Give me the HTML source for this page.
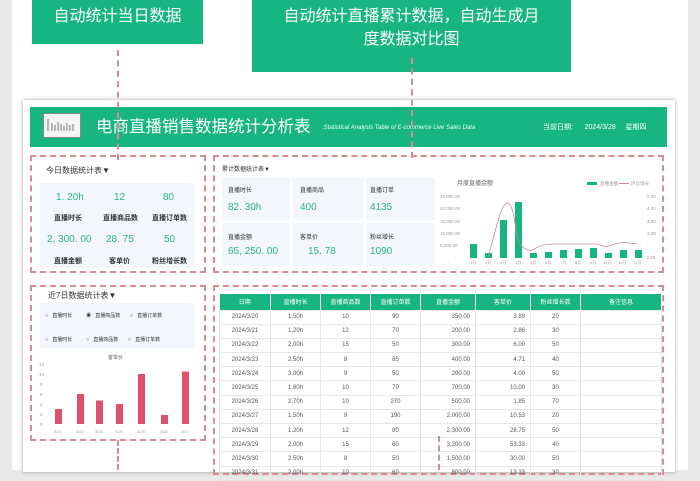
<!DOCTYPE html>
<html><head><meta charset="utf-8"><style>
*{margin:0;padding:0;box-sizing:border-box}
body{width:700px;height:470px;overflow:hidden;background:#e9e9e9;font-family:"Liberation Sans","Noto Sans CJK SC",sans-serif;position:relative}
.a{position:absolute}
.pg{left:12px;top:0;width:676px;height:470px;background:#fff}
.g{background:#17b582;color:#fff}
.dash{border:2px dashed #d98a93}
.vl{width:0;border-left:2px dashed #d98a93}
.t{font-size:8px;color:#333;white-space:nowrap}
.num{color:#2bb28a;font-size:10px}
.lab{font-size:7px;font-weight:bold;color:#333}
table{border-collapse:collapse;font-size:6px;color:#555}
td{border:1px solid #e6e6e6;height:14.2px;text-align:center}
th{background:#17b582;color:#fff;font-weight:normal;height:16px;border-right:1px solid #fff}
.card{background:#f3f7fb}
</style></head><body>
<div class="a pg"></div>
<div class="a g" style="left:32px;top:0;width:171px;height:44px;font-size:16px;text-align:center;line-height:34px">自动统计当日数据</div>
<div class="a g" style="left:252px;top:0;width:319px;height:72px;font-size:16px;text-align:center;line-height:23px;padding-top:5px">自动统计直播累计数据，自动生成月<br>度数据对比图</div>
<div class="a" style="left:23px;top:100px;width:652px;height:372px;background:#fff;box-shadow:0 0 4px rgba(0,0,0,.35)"></div>
<div class="a g" style="left:30px;top:107px;width:637px;height:40px"></div>
<div class="a" style="left:43px;top:113px;width:38px;height:25px;background:#f4f4f4;border:1px solid #888"></div>
<svg class="a" style="left:46px;top:117px" width="32" height="18"><g stroke="#777" stroke-width="1"><path d="M2 2V14M6 6V14M9 8V14M12 5V14M15 7V14M18 9V14M21 6V14M24 8V14M27 7V14"/></g></svg>
<div class="a" style="left:96px;top:119px;font-size:16.5px;line-height:17px;color:#fff;white-space:nowrap">电商直播销售数据统计分析表</div>
<div class="a" style="left:322px;top:125px;font-size:6px;font-style:italic;color:#e8fff5;white-space:nowrap">.Statistical Analysis Table of E-commerce Live Sales Data</div>
<div class="a" style="left:543px;top:122px;font-size:7px;color:#fff;white-space:nowrap">当前日期:&nbsp;&nbsp;&nbsp;&nbsp;&nbsp;&nbsp;2024/3/28&nbsp;&nbsp;&nbsp;&nbsp;&nbsp;星期四</div>
<div class="a vl" style="left:117px;top:50px;height:110px"></div>
<div class="a vl" style="left:411px;top:58px;height:100px"></div>

<div class="a dash" style="left:30px;top:155px;width:176px;height:118px"></div>
<div class="a t" style="left:46px;top:165px">今日数据统计表▼</div>
<div class="a card" style="left:40px;top:183px;width:155px;height:85px"></div>
<div class="a num" style="left:56px;top:192px">1. 20h</div>
<div class="a num" style="left:114px;top:192px">12</div>
<div class="a num" style="left:163px;top:192px">80</div>
<div class="a lab" style="left:54px;top:213px">直播时长</div>
<div class="a lab" style="left:103px;top:213px">直播商品数</div>
<div class="a lab" style="left:152px;top:213px">直播订单数</div>
<div class="a num" style="left:47px;top:234px">2, 300. 00</div>
<div class="a num" style="left:106px;top:234px">28. 75</div>
<div class="a num" style="left:164px;top:234px">50</div>
<div class="a lab" style="left:54px;top:256px">直播金额</div>
<div class="a lab" style="left:109px;top:256px">客单价</div>
<div class="a lab" style="left:152px;top:256px">粉丝增长数</div>

<div class="a dash" style="left:213px;top:155px;width:451px;height:118px"></div>
<div class="a t" style="left:222px;top:164px;font-size:6px">累计数据统计表▼</div>
<div class="a card" style="left:222px;top:178px;width:68px;height:42px"></div>
<div class="a card" style="left:293px;top:178px;width:70px;height:42px"></div>
<div class="a card" style="left:366px;top:178px;width:69px;height:42px"></div>
<div class="a card" style="left:222px;top:223px;width:68px;height:43px"></div>
<div class="a card" style="left:293px;top:223px;width:70px;height:43px"></div>
<div class="a card" style="left:366px;top:223px;width:69px;height:43px"></div>
<div class="a t" style="left:228px;top:185px;font-size:6px">直播时长</div>
<div class="a t" style="left:300px;top:185px;font-size:6px">直播商品</div>
<div class="a t" style="left:370px;top:185px;font-size:6px">直播订单</div>
<div class="a num" style="left:228px;top:202px">82. 30h</div>
<div class="a num" style="left:300px;top:202px">400</div>
<div class="a num" style="left:370px;top:202px">4135</div>
<div class="a t" style="left:228px;top:232px;font-size:6px">直播金额</div>
<div class="a t" style="left:300px;top:232px;font-size:6px">客单价</div>
<div class="a t" style="left:370px;top:232px;font-size:6px">粉丝增长</div>
<div class="a num" style="left:228px;top:246px">65, 250. 00</div>
<div class="a num" style="left:308px;top:246px">15. 78</div>
<div class="a num" style="left:370px;top:246px">1090</div>
<svg class="a" style="left:437px;top:175px" width="225" height="92" font-family="Liberation Sans" font-size="4.5" fill="#999">
<text x="20" y="10" font-size="6" fill="#666">月度直播金额</text>
<rect x="150" y="7" width="10" height="3" fill="#17b582"/><text x="163" y="10">直播金额</text>
<line x1="182" y1="8.5" x2="192" y2="8.5" stroke="#c78a95"/><text x="194" y="10">环比增长</text>
<text x="3" y="23">25,000.00</text><text x="3" y="35">20,000.00</text><text x="3" y="48">15,000.00</text><text x="3" y="60">10,000.00</text><text x="3" y="72">5,000.00</text><text x="18" y="84">-</text>
<text x="210" y="23">6.00</text><text x="210" y="35">4.00</text><text x="210" y="48">4.00</text><text x="210" y="60">2.00</text><text x="210" y="72">-</text><text x="208" y="84">-2.00</text>
<g fill="#17b582">
<rect x="33" y="69" width="7" height="14"/><rect x="48" y="78" width="7" height="5"/><rect x="63" y="45" width="7" height="38"/><rect x="78" y="27" width="7" height="56"/><rect x="93" y="78" width="7" height="5"/><rect x="108" y="77" width="7" height="6"/><rect x="123" y="75" width="7" height="8"/><rect x="138" y="74" width="7" height="9"/><rect x="153" y="73" width="7" height="10"/><rect x="168" y="78" width="7" height="5"/><rect x="183" y="75" width="7" height="8"/><rect x="198" y="75" width="7" height="8"/></g>
<path d="M51 82 C58 60,63 30,70 28 C78 28,78 60,82 68 C88 75,92 76,96 75 C102 70,110 69,120 69 L160 69 C168 72,170 72,175 70 C182 67,188 67,200 69" fill="none" stroke="#c78a95" stroke-width="0.8"/>
<g font-size="4"><text x="33" y="89">1月</text><text x="48" y="89">2月</text><text x="63" y="89">3月</text><text x="78" y="89">4月</text><text x="93" y="89">5月</text><text x="108" y="89">6月</text><text x="123" y="89">7月</text><text x="138" y="89">8月</text><text x="153" y="89">9月</text><text x="166" y="89">10月</text><text x="181" y="89">11月</text><text x="196" y="89">12月</text></g>
</svg>

<div class="a dash" style="left:30px;top:285px;width:176px;height:156px"></div>
<div class="a t" style="left:48px;top:290px">近7日数据统计表▼</div>
<div class="a card" style="left:40px;top:303px;width:155px;height:45px"></div>
<div class="a t" style="left:45px;top:312px;font-size:5px">○&nbsp;&nbsp;&nbsp;直播时长&nbsp;&nbsp;&nbsp;&nbsp;&nbsp;&nbsp;&nbsp;&nbsp;&nbsp;&nbsp;◉&nbsp;&nbsp;&nbsp;直播商品数&nbsp;&nbsp;&nbsp;&nbsp;&nbsp;&nbsp;&nbsp;○&nbsp;&nbsp;&nbsp;直播订单数</div>
<div class="a t" style="left:45px;top:336px;font-size:5px">○&nbsp;&nbsp;&nbsp;直播时长&nbsp;&nbsp;&nbsp;&nbsp;&nbsp;&nbsp;&nbsp;&nbsp;&nbsp;&nbsp;○&nbsp;&nbsp;&nbsp;直播商品数&nbsp;&nbsp;&nbsp;&nbsp;&nbsp;&nbsp;&nbsp;○&nbsp;&nbsp;&nbsp;直播订单数</div>
<svg class="a" style="left:36px;top:352px" width="165" height="86" font-family="Liberation Sans" font-size="4.5" fill="#999">
<text x="72" y="7" font-size="5" fill="#666">客单价</text>
<text x="3" y="14">12</text><text x="3" y="24">10</text><text x="4" y="34">8</text><text x="4" y="44">6</text><text x="4" y="54">4</text><text x="4" y="64">2</text><text x="4" y="74">0</text>
<g fill="#e0506c"><rect x="19" y="57" width="7" height="15"/><rect x="41" y="42" width="7" height="30"/><rect x="60" y="48.5" width="7" height="23.5"/><rect x="80" y="52" width="7" height="20"/><rect x="102" y="22" width="7" height="50"/><rect x="125" y="63" width="7" height="9"/><rect x="146" y="19.5" width="7" height="52.5"/></g>
<g font-size="4"><text x="18" y="81">3/21</text><text x="40" y="81">3/22</text><text x="59" y="81">3/23</text><text x="79" y="81">3/24</text><text x="101" y="81">3/25</text><text x="124" y="81">3/26</text><text x="145" y="81">3/27</text></g>
</svg>
<div class="a vl" style="left:117px;top:440px;height:30px"></div>

<div class="a dash" style="left:213px;top:285px;width:451px;height:190px"></div>
<table class="a" style="left:219px;top:294px;width:443px">
<tr><th style="width:51px">日期</th><th style="width:50px">直播时长</th><th style="width:50px">直播商品数</th><th style="width:50px">直播订单数</th><th style="width:55px">直播金额</th><th style="width:55px">客单价</th><th style="width:50px">粉丝增长数</th><th>备注信息</th></tr>
<tr><td>2024/3/20</td><td>1.50h</td><td>10</td><td>90</td><td style="text-align:right;padding-right:5px">350.00</td><td style="text-align:right;padding-right:5px">3.89</td><td>20</td><td></td></tr>
<tr><td>2024/3/21</td><td>1.20h</td><td>12</td><td>70</td><td style="text-align:right;padding-right:5px">200.00</td><td style="text-align:right;padding-right:5px">2.86</td><td>30</td><td></td></tr>
<tr><td>2024/3/22</td><td>2.00h</td><td>15</td><td>50</td><td style="text-align:right;padding-right:5px">300.00</td><td style="text-align:right;padding-right:5px">6.00</td><td>50</td><td></td></tr>
<tr><td>2024/3/23</td><td>2.50h</td><td>8</td><td>85</td><td style="text-align:right;padding-right:5px">400.00</td><td style="text-align:right;padding-right:5px">4.71</td><td>40</td><td></td></tr>
<tr><td>2024/3/24</td><td>3.00h</td><td>9</td><td>50</td><td style="text-align:right;padding-right:5px">200.00</td><td style="text-align:right;padding-right:5px">4.00</td><td>50</td><td></td></tr>
<tr><td>2024/3/25</td><td>1.60h</td><td>10</td><td>70</td><td style="text-align:right;padding-right:5px">700.00</td><td style="text-align:right;padding-right:5px">10.00</td><td>30</td><td></td></tr>
<tr><td>2024/3/26</td><td>2.70h</td><td>10</td><td>270</td><td style="text-align:right;padding-right:5px">500.00</td><td style="text-align:right;padding-right:5px">1.85</td><td>70</td><td></td></tr>
<tr><td>2024/3/27</td><td>1.50h</td><td>9</td><td>190</td><td style="text-align:right;padding-right:5px">2,000.00</td><td style="text-align:right;padding-right:5px">10.53</td><td>20</td><td></td></tr>
<tr><td>2024/3/28</td><td>1.20h</td><td>12</td><td>80</td><td style="text-align:right;padding-right:5px">2,300.00</td><td style="text-align:right;padding-right:5px">28.75</td><td>50</td><td></td></tr>
<tr><td>2024/3/29</td><td>2.00h</td><td>15</td><td>60</td><td style="text-align:right;padding-right:5px">3,200.00</td><td style="text-align:right;padding-right:5px">53.33</td><td>40</td><td></td></tr>
<tr><td>2024/3/30</td><td>2.50h</td><td>8</td><td>50</td><td style="text-align:right;padding-right:5px">1,500.00</td><td style="text-align:right;padding-right:5px">30.00</td><td>50</td><td></td></tr>
<tr><td>2024/3/31</td><td>2.00h</td><td>10</td><td>60</td><td style="text-align:right;padding-right:5px">800.00</td><td style="text-align:right;padding-right:5px">13.33</td><td>30</td><td></td></tr>
</table>
<div class="a vl" style="left:438px;top:436px;height:34px"></div>
</body></html>
